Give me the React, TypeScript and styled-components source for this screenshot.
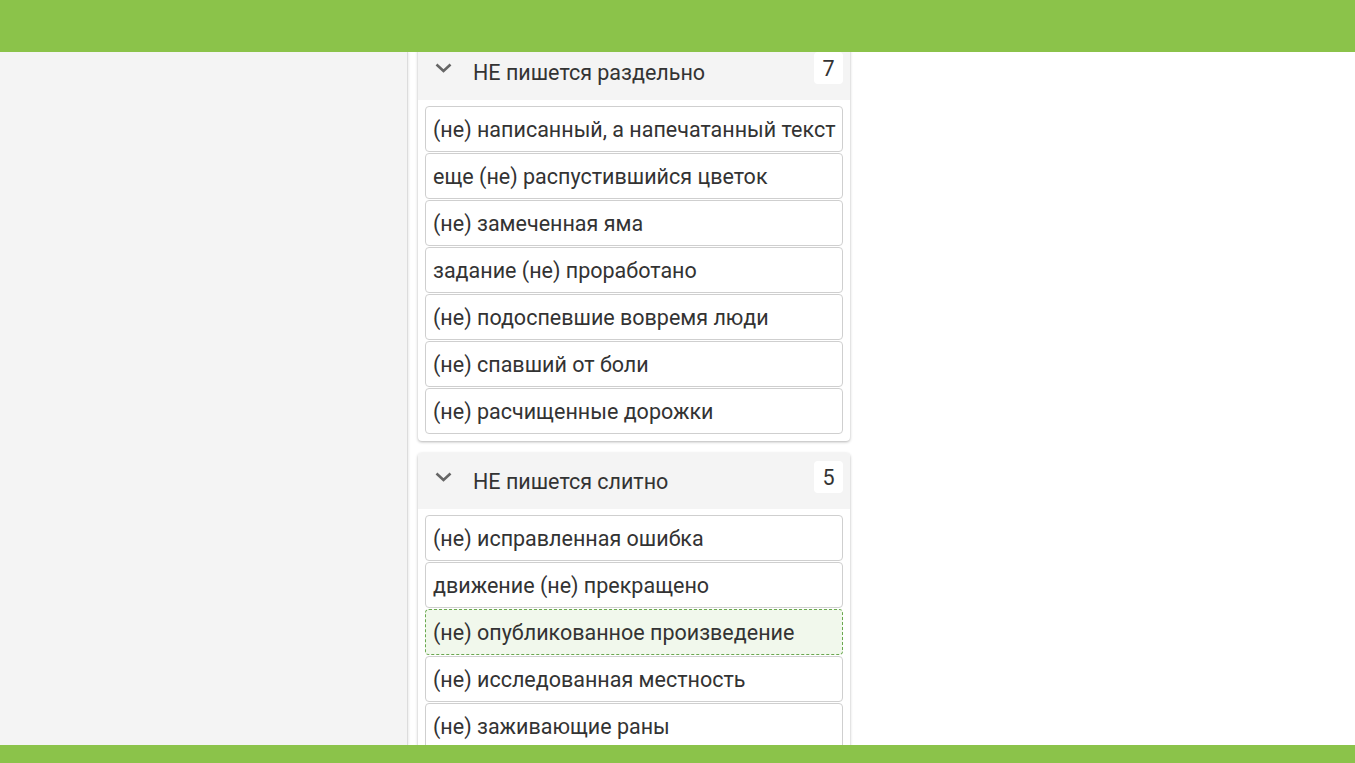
import React from "react";
import styled, { createGlobalStyle } from "styled-components";

const Global = createGlobalStyle`
  html, body { margin: 0; padding: 0; height: 100%; overflow: hidden; }
  body { font-family: Roboto, "Liberation Sans", Arial, sans-serif; background: #fff; }
  #root { height: 100%; }
`;

const Page = styled.div`
  display: flex;
  flex-direction: column;
  height: 763px;
`;

const TopBar = styled.div`
  height: 52px;
  flex: none;
  background: #8bc34a;
`;

const BottomBar = styled.div`
  height: 18px;
  flex: none;
  background: #8bc34a;
`;

const Main = styled.div`
  flex: 1;
  display: flex;
  min-height: 0;
  overflow: hidden;
`;

const Sidebar = styled.div`
  width: 407px;
  flex: none;
  background: #f4f4f4;
  border-right: 1px solid #dcdcdc;
  box-shadow: 1px 0 2px rgba(0, 0, 0, 0.08);
`;

const Content = styled.div`
  flex: 1;
  overflow: hidden;
  padding-left: 10px;
`;

const Column = styled.div`
  width: 432px;
  margin-top: -8px;
  display: flex;
  flex-direction: column;
  gap: 12px;
`;

const Card = styled.section`
  background: #fff;
  border-radius: 4px;
  box-shadow: 0 1px 3px rgba(0, 0, 0, 0.3);
  overflow: hidden;
`;

const CardHeader = styled.div`
  height: 56px;
  background: #f4f4f4;
  display: flex;
  align-items: flex-start;
  padding: 0 7px 0 17px;
`;

const Chevron = styled.svg`
  width: 17px;
  height: 10px;
  margin-top: 19px;
  flex: none;
`;

const Title = styled.div`
  font-size: 21.5px;
  color: #333;
  margin-left: 21px;
  margin-top: 16px;
  line-height: 25px;
  flex: 1;
`;

const Badge = styled.div`
  margin-top: 8px;
  min-width: 29px;
  height: 32px;
  background: #fff;
  border-radius: 4px;
  font-size: 21.5px;
  color: #333;
  display: flex;
  align-items: center;
  justify-content: center;
`;

const List = styled.div`
  padding: 6px 7px 7px;
  display: flex;
  flex-direction: column;
  gap: 1px;
`;

const Item = styled.div<{ $active?: boolean }>`
  height: 46px;
  box-sizing: border-box;
  border: 1px ${(p) => (p.$active ? "dashed #6aa84f" : "solid #cfcfcf")};
  background: ${(p) => (p.$active ? "#f1f8ec" : "#fff")};
  border-radius: 4px;
  padding: 1px 7px 0;
  display: flex;
  align-items: center;
  font-size: 21.5px;
  color: #333;
  white-space: nowrap;
`;

type Group = { title: string; items: string[]; active?: number };

const groups: Group[] = [
  {
    title: "НЕ пишется раздельно",
    items: [
      "(не) написанный, а напечатанный текст",
      "еще (не) распустившийся цветок",
      "(не) замеченная яма",
      "задание (не) проработано",
      "(не) подоспевшие вовремя люди",
      "(не) спавший от боли",
      "(не) расчищенные дорожки",
    ],
  },
  {
    title: "НЕ пишется слитно",
    items: [
      "(не) исправленная ошибка",
      "движение (не) прекращено",
      "(не) опубликованное произведение",
      "(не) исследованная местность",
      "(не) заживающие раны",
    ],
    active: 2,
  },
];

export default function App() {
  return (
    <>
      <Global />
      <Page>
        <TopBar />
        <Main>
          <Sidebar />
          <Content>
            <Column>
              {groups.map((g) => (
                <Card key={g.title}>
                  <CardHeader>
                    <Chevron viewBox="0 0 17 10">
                      <polyline
                        points="1.5,1.5 8.5,8 15.5,1.5"
                        fill="none"
                        stroke="#666"
                        strokeWidth="2.6"
                      />
                    </Chevron>
                    <Title>{g.title}</Title>
                    <Badge>{g.items.length}</Badge>
                  </CardHeader>
                  <List>
                    {g.items.map((it, i) => (
                      <Item key={it} $active={i === g.active}>
                        {it}
                      </Item>
                    ))}
                  </List>
                </Card>
              ))}
            </Column>
          </Content>
        </Main>
        <BottomBar />
      </Page>
    </>
  );
}
